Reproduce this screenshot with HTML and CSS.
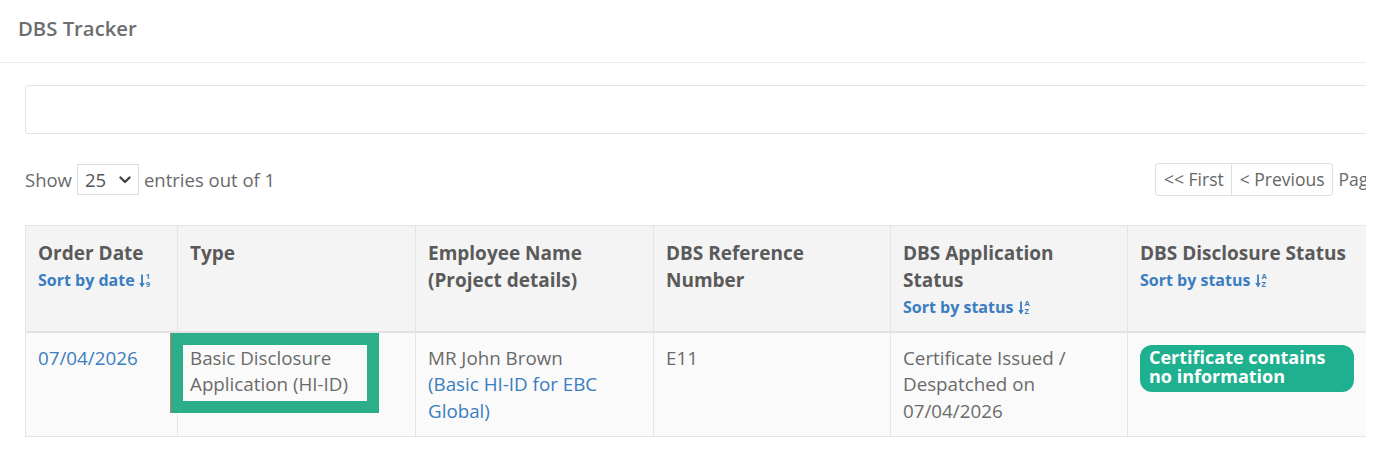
FILE: index.html
```html
<!DOCTYPE html>
<html lang="en">
<head>
<meta charset="utf-8">
<title>DBS Tracker</title>
<link rel="stylesheet" href="styles.css">
</head>
<body>
<div class="page">
  <div class="page-header">
    <h1 class="title">DBS Tracker</h1>
  </div>
  <div class="content">
    <div class="search-box"></div>
    <div class="controls">
      <div class="length">
        <span>Show</span>
        <div class="select">
          <span>25</span>
          <svg class="chev" width="12" height="8" viewBox="0 0 12 8"><path d="M1.5 1.5 L6 6 L10.5 1.5" fill="none" stroke="#444" stroke-width="2.4" stroke-linecap="round" stroke-linejoin="round"/></svg>
        </div>
        <span>entries out of 1</span>
      </div>
      <div class="pager">
        <div class="pager-buttons">
          <span class="pg-btn first">&lt;&lt; First</span>
          <span class="pg-btn">&lt; Previous</span>
        </div>
        <span class="page-info">Page 1 of 1</span>
      </div>
    </div>
    <table class="grid">
      <colgroup>
        <col class="c1"><col class="c2"><col class="c3"><col class="c4"><col class="c5"><col class="c6">
      </colgroup>
      <thead>
        <tr>
          <th>Order Date<a class="sort">Sort by date <span class="sort-ic"><svg width="6" height="14" viewBox="0 0 6 14"><path d="M3 0.5 V12" stroke="#3a7dc0" stroke-width="1.8"/><path d="M0.3 9 L3 13.5 L5.7 9 Z" fill="#3a7dc0"/></svg><span class="sort-txt"><span>1</span><span>9</span></span></span></a></th>
          <th>Type</th>
          <th>Employee Name (Project details)</th>
          <th>DBS Reference Number</th>
          <th>DBS Application Status<a class="sort">Sort by status <span class="sort-ic"><svg width="6" height="14" viewBox="0 0 6 14"><path d="M3 0.5 V12" stroke="#3a7dc0" stroke-width="1.8"/><path d="M0.3 9 L3 13.5 L5.7 9 Z" fill="#3a7dc0"/></svg><span class="sort-txt"><span>A</span><span>Z</span></span></span></a></th>
          <th>DBS Disclosure Status<a class="sort">Sort by status <span class="sort-ic"><svg width="6" height="14" viewBox="0 0 6 14"><path d="M3 0.5 V12" stroke="#3a7dc0" stroke-width="1.8"/><path d="M0.3 9 L3 13.5 L5.7 9 Z" fill="#3a7dc0"/></svg><span class="sort-txt"><span>A</span><span>Z</span></span></span></a></th>
        </tr>
      </thead>
      <tbody>
        <tr>
          <td><a class="link">07/04/2026</a></td>
          <td><div class="highlight">Basic Disclosure Application (HI-ID)</div></td>
          <td>MR John Brown<br><a class="link">(Basic HI-ID for EBC Global)</a></td>
          <td>E11</td>
          <td>Certificate Issued / Despatched on 07/04/2026</td>
          <td><span class="badge">Certificate contains no information</span></td>
        </tr>
      </tbody>
    </table>
  </div>
</div>
</body>
</html>
```
FILE: styles.css
```css
html, body {
  margin: 0;
  padding: 0;
  background: #ffffff;
}
body {
  font-family: "Open Sans", "Noto Sans", sans-serif;
  color: #6a6a6a;
  font-size: 18.8px;
}
.page {
  width: 1366px;
  overflow: hidden;
  padding-bottom: 12px;
}
.page-header {
  height: 63px;
  border-bottom: 1px solid #e8ecef;
  display: flex;
  align-items: center;
  padding-left: 18px;
  padding-bottom: 7px;
  box-sizing: border-box;
}
.title {
  margin: 0;
  font-size: 20.3px;
  font-weight: 600;
  color: #6b6d6f;
}
.content {
  padding: 22px 0 0 25px;
}
.search-box {
  width: 1360px;
  height: 49px;
  box-sizing: border-box;
  border: 1px solid #e3e3e3;
  border-radius: 3px;
}
.controls {
  display: flex;
  align-items: center;
  margin-top: 29px;
  height: 32px;
  width: 1500px;
}
.length {
  width: 1130px;
  display: flex;
  align-items: center;
  gap: 5px;
  font-size: 18.5px;
  color: #6a6a6a;
}
.select {
  width: 62px;
  height: 31px;
  box-sizing: border-box;
  border: 1px solid #dedede;
  display: flex;
  align-items: center;
  justify-content: space-between;
  padding: 0 7px 0 7px;
  color: #555;
  margin-top: 1px;
}
.pager {
  display: flex;
  align-items: center;
  gap: 6px;
  white-space: nowrap;
  font-size: 17.5px;
}
.pager-buttons {
  display: flex;
  border: 1px solid #e0e0e0;
  border-radius: 3px;
  height: 33px;
  box-sizing: border-box;
}
.pg-btn {
  display: flex;
  align-items: center;
  padding: 0 7px 0 8px;
  color: #666;
}
.pg-btn.first {
  border-right: 1px solid #e0e0e0;
}
.page-info {
  color: #6a6a6a;
}
.grid {
  margin-top: 30px;
  border-collapse: collapse;
  table-layout: fixed;
  width: 1341px;
}
.c1 { width: 152px; }
.c2 { width: 238px; }
.c3 { width: 238px; }
.c4 { width: 237px; }
.c5 { width: 237px; }
.c6 { width: 239px; }
.grid th, .grid td {
  border: 1px solid #e4e4e4;
  padding: 12px 12px 12px;
  vertical-align: top;
  text-align: left;
  line-height: 26.5px;
}
.grid th {
  background: #f4f4f4;
  color: #5a5a5a;
  font-weight: 700;
  font-size: 19px;
  border-bottom: 2px solid #e2e2e2;
  height: 106px;
  box-sizing: border-box;
  line-height: 27px;
  padding-top: 14px;
  padding-bottom: 8px;
}
.grid td {
  background: #fafafa;
  font-size: 18.8px;
  color: #6a6a6a;
}
.sort {
  display: block;
  font-size: 16px;
  color: #3a7dc0;
  font-weight: 700;
  line-height: 27px;
}
.sort-ic {
  display: inline-flex;
  align-items: flex-end;
  vertical-align: -2px;
  gap: 1px;
}
.sort-txt {
  display: inline-flex;
  flex-direction: column;
  font-size: 7.5px;
  line-height: 7.5px;
  font-weight: 700;
}
.link {
  color: #3a7dc0;
}
.highlight {
  display: inline-block;
  width: 175px;
  margin: -12px 0 0 -19px;
  border: 12px solid #2cae8b;
  box-shadow: -1px 0 0 #d6765f;
  padding: 0 2px 3px 7px;
  background: #fafafa;
}
.badge {
  display: block;
  background: #1eb08f;
  color: #ffffff;
  font-weight: 700;
  font-size: 18px;
  line-height: 19px;
  padding: 3px 9px 6px;
  border-radius: 12px;
}
```
